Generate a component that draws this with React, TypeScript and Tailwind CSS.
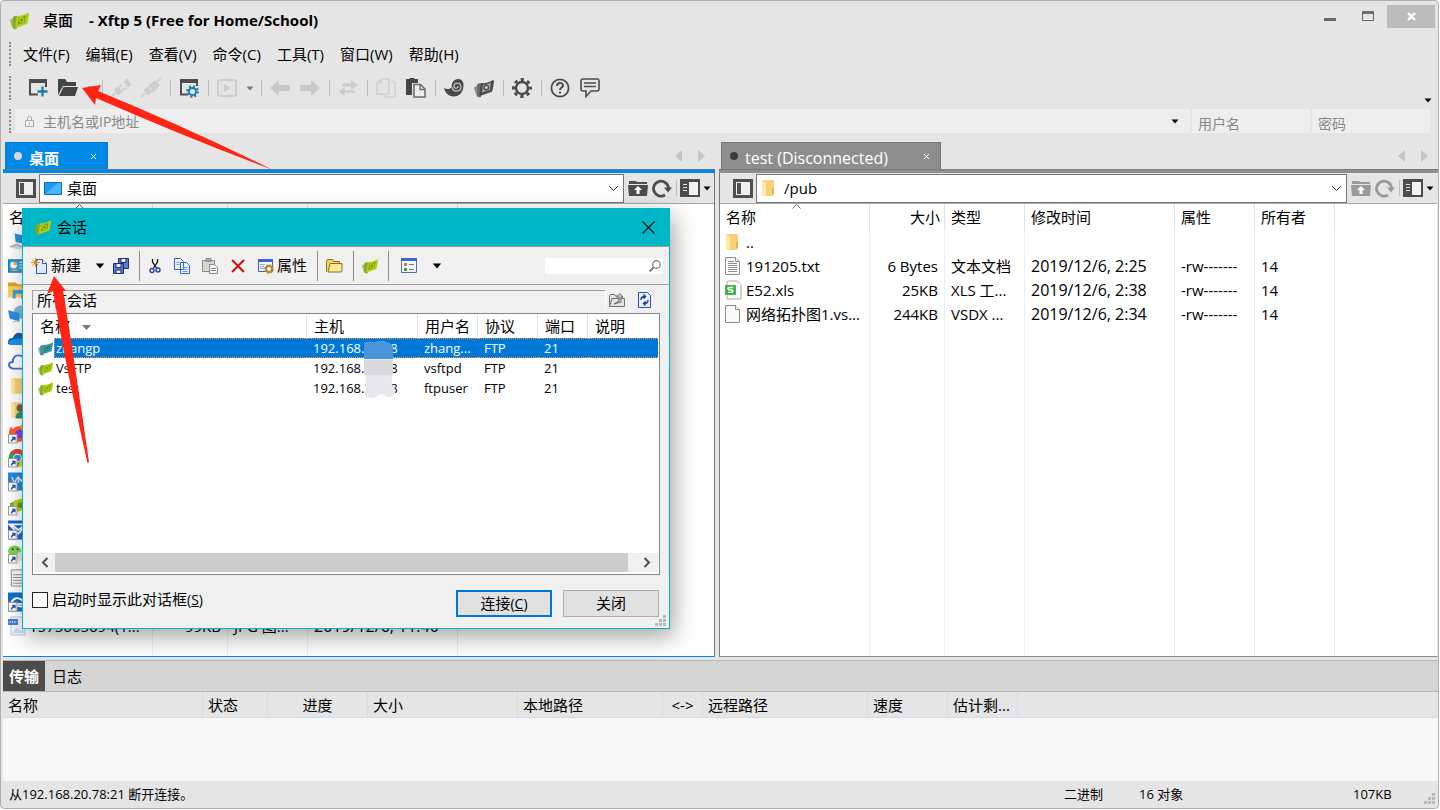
import React from "react";
import clsx from "clsx";

type IconProps = { className?: string };

const Caret = ({ className = "fill-black" }: IconProps) => (
  <svg className={className} width="8" height="5" viewBox="0 0 8 5">
    <path d="M0.5 0.5h7L4 4.5z" />
  </svg>
);

const Chevron = () => (
  <svg width="11" height="7" viewBox="0 0 11 7" fill="none" stroke="#333">
    <path d="M1 1l4.5 4.5L10 1" />
  </svg>
);

const XftpIcon = ({
  size = 16,
  front = "#b3cf12",
  back = "#7fa82e",
  hole = "#6d8f0c",
}: {
  size?: number;
  front?: string;
  back?: string;
  hole?: string;
}) => (
  <svg width={size} height={size} viewBox="0 0 20 20">
    <path d="M0 10q0-1.500 1.500-1.500L5 8l-1 10q-2 0-2.500-3z" fill={back} opacity="0.7" />
    <path d="M3 7q0-1 1.500-1.500L9 5 7 19q-3 1-4-1z" fill={back} />
    <path d="M7 5q5 1 12-3 1 0 1 1.500l-1.500 9q0 1-1.500 1.500L6 18q-1 0-.500-1.500z" fill={front} />
    <path d="M9 7q4 0 8-2.500l-1.200 7.500L8 14.500z" fill={hole} opacity="0.7" />
    <circle cx="12.300" cy="9.600" r="2.900" fill={front} />
    <circle cx="12.300" cy="9.600" r="1.500" fill={hole} />
  </svg>
);

const NewWindowIcon = () => (
  <svg width="20" height="20" viewBox="0 0 20 20">
    <path d="M10 16.5H2V2h16v7" fill="none" stroke="#4c4c4c" strokeWidth="2" />
    <path d="M1 1h18v4H1z" fill="#4c4c4c" />
    <path d="M14.5 8.500v10M9.500 13.500h10" stroke="#1f7fae" strokeWidth="2.400" />
  </svg>
);

const OpenFolderIcon = () => (
  <svg width="20" height="20" viewBox="0 0 20 20" fill="#444">
    <path d="M0 17V1h7l2 3h9v4H5z" />
    <path d="M5.500 9H20l-3 9H1z" />
  </svg>
);

const PlugIcon = ({ split }: { split?: boolean }) => (
  <svg width="22" height="20" viewBox="0 0 22 20" fill="#cecece" stroke="#cecece">
    <path d="M1 19l4-4" strokeWidth="2" />
    <path d="M4 12l4-3 4 5-4 3z" />
    <path d="M9 9l3-2M12 13l3-3" strokeWidth="2" />
    {split ? (
      <path d="M14 4l3-3 4 6-3 2zM15 8l2 3" />
    ) : (
      <path d="M10 7l5-4 4 4-5 6zM17 4l4-4" strokeWidth="1.500" />
    )}
  </svg>
);

const WindowGearIcon = () => (
  <svg width="20" height="20" viewBox="0 0 20 20">
    <path d="M8 16.500H2V2h16v6" fill="none" stroke="#4c4c4c" strokeWidth="2" />
    <path d="M1 1h18v4H1z" fill="#4c4c4c" />
    <circle cx="13.500" cy="13.500" r="3.600" fill="none" stroke="#1f7fae" strokeWidth="2" />
    <circle cx="13.500" cy="13.500" r="5.200" fill="none" stroke="#1f7fae" strokeWidth="2.400" strokeDasharray="2 2.080" />
  </svg>
);

const PlayIcon = () => (
  <svg width="20" height="20" viewBox="0 0 20 20">
    <rect x="1" y="2" width="18" height="16" rx="2" fill="none" stroke="#cfcfcf" strokeWidth="2" />
    <path d="M7 6l7 4-7 4z" fill="#cfcfcf" />
  </svg>
);

const ArrowIcon = ({ flip }: { flip?: boolean }) => (
  <svg className={clsx(flip && "rotate-180")} width="20" height="20" viewBox="0 0 20 20" fill="#c9c9c9">
    <path d="M0 10l9-8v5h11v6H9v5z" />
  </svg>
);

const SwapIcon = () => (
  <svg width="20" height="18" viewBox="0 0 20 18" fill="#cbcbcb">
    <path d="M4 4.500h9V1l7 5-7 5V7.500H4z" />
    <path d="M17 11v3H7v3.500L0 12.500l7-5V11z" stroke="#e5e5e5" strokeWidth="0.800" />
  </svg>
);

const CopyIcon = () => (
  <svg width="20" height="20" viewBox="0 0 20 20" fill="#e5e5e5" stroke="#cfcfcf" strokeWidth="1.500">
    <path d="M9 17v2h10V5l-2-1.500H15" />
    <path d="M1 5l4-4h8v15H1zM5 1v4H1" />
  </svg>
);

const PasteIcon = () => (
  <svg width="20" height="20" viewBox="0 0 20 20">
    <path d="M0 1h3l1-1h4l1 1h3v4H6v12H0z" fill="#454545" />
    <path d="M8 6.500h6.500L19 11v8H8z" fill="#eee" stroke="#6b6b6b" strokeWidth="1.600" />
    <path d="M14 7v4.500h5" fill="none" stroke="#6b6b6b" strokeWidth="1.400" />
  </svg>
);

const SwirlIcon = () => (
  <svg width="20" height="20" viewBox="0 0 20 20">
    <path d="M0 10c3 2 6 1 8-1C7 5 10 1 14 1c3 0 5.500 2 5.500 6 0 7-4 11.500-10 11.500-5 0-8.500-4-9.500-8.500z" fill="#494949" />
    <path d="M8 9c0 6 9 5 9 0 0-5-7-5-7-1 0 3 4.500 3 4 0" fill="none" stroke="#c9c9c9" strokeWidth="1.200" />
  </svg>
);

const GearIcon = () => (
  <svg width="20" height="20" viewBox="0 0 20 20" fill="none" stroke="#4a4a4a">
    <circle cx="10" cy="10" r="6" strokeWidth="2.400" />
    <circle cx="10" cy="10" r="8.400" strokeWidth="3" strokeDasharray="3.200 3.397" strokeDashoffset="1.600" />
  </svg>
);

const HelpIcon = () => (
  <svg width="20" height="20" viewBox="0 0 20 20" fill="none" stroke="#4c4c4c" strokeWidth="1.800">
    <circle cx="10" cy="10" r="8.600" />
    <path d="M7 8c0-4 6-4 6-.500 0 2-3 2.200-3 4.500" strokeWidth="2" />
    <path d="M10 13.500v2" strokeWidth="2" />
  </svg>
);

const ChatIcon = () => (
  <svg width="20" height="20" viewBox="0 0 20 20" fill="none" stroke="#4c4c4c" strokeWidth="1.600">
    <path d="M3 1h14q2 0 2 2v8q0 2-2 2h-6l-5 5.500V13H3q-2 0-2-2V3q0-2 2-2z" />
    <path d="M4 5h12M4 8.500h12" />
  </svg>
);

const FolderIcon = () => (
  <svg width="14" height="18" viewBox="0 0 14 18">
    <path d="M2 1h10l1 1v13l-1 2H2z" fill="#f6d276" />
    <path d="M11 9h2v6h-2z" fill="#e0b550" />
    <path d="M1 1l4 3v13.500L1 16z" fill="#ffe9a8" />
  </svg>
);

const DocIcon = ({ lines }: { lines?: boolean }) => (
  <svg width="15" height="18" viewBox="0 0 15 18" fill="#fafafa" stroke="#8c8c8c">
    <path d="M.500.500h10l4 4v13H.500z" />
    <path d="M10.500.500v4h4" />
    {lines && <path d="M3 4.500h6M3 6.500h9M3 8.500h9M3 10.500h9M3 12.500h9M3 14.500h9" />}
  </svg>
);

const XlsIcon = () => (
  <svg width="18" height="20" viewBox="0 0 18 20">
    <path d="M3.500 1h9L16 4.500V19H2V2z" fill="#fafafa" stroke="#a9a9a9" />
    <rect x="0" y="5" width="11" height="10" rx="1" fill="#45b14d" />
    <path d="M8 7.500H4.500q-1.500 0-1.500 1T4.500 10h2Q8 10 8 11t-1.500 1.300H3" fill="none" stroke="#fff" strokeWidth="1.300" />
  </svg>
);

const Shortcut = () => (
  <g>
    <rect x="0.500" y="10.500" width="9" height="9" fill="#fff" stroke="#999" />
    <path d="M3 18c0-2 1-3 2-3.500L4 13h4v4l-1.500-1.200C5 16.300 4.500 17 4.500 18z" fill="#24539b" />
  </g>
);

const desktopIcons = [
  <g key="pc">
    <path d="M7 1l13 3v9L8 10z" fill="#2c8fe0" />
    <path d="M0 15l9-4 9 4-7 3z" fill="#ccd5dc" />
    <path d="M3 15l6-2 5 2" fill="none" stroke="#9aa7b0" />
  </g>,
  <g key="panel">
    <rect x="0.500" y="3.500" width="19" height="13" fill="#2f9fe0" stroke="#1571ae" />
    <circle cx="6" cy="9" r="3.500" fill="#fff" />
    <path d="M6 9V5.500A3.500 3.500 0 0 1 9.500 9z" fill="#f2a43c" />
    <path d="M12 6h6M12 9h6M12 12h6" stroke="#fff" />
    <path d="M4 14.500h6" stroke="#f2a43c" strokeWidth="1.500" />
  </g>,
  <g key="libs">
    <path d="M0 2h8l2 2h10v4H0z" fill="#e0a12c" />
    <path d="M0 6h20v12H0z" fill="#fbd05c" />
    <path d="M5 10h12v9h-3v-5H8v5H5z" fill="#3f9be0" />
  </g>,
  <g key="net">
    <circle cx="13" cy="8" r="7" fill="#7fb9d6" />
    <path d="M0 6l12 3v9L2 15z" fill="#2c8fe0" />
    <path d="M4 19l8-1-3-2z" fill="#b8c4cc" />
  </g>,
  <g key="onedrive">
    <path d="M0 16q-1-6 5-6 3-7 9-5l6 4v8H2z" fill="#0f5fae" />
    <path d="M0 14q5-4 20-4v7H2z" fill="#1f8fe6" />
  </g>,
  <path key="cloud" d="M5 17q-4-1-4-4t4-3q0-7 6-7t6 6l3 1v7z" fill="#fff" stroke="#3c6fe0" strokeWidth="2" />,
  <g key="folder">
    <path d="M4 2h14v16H4z" fill="#f6d276" />
    <path d="M3 1l4 3v14l-4-2z" fill="#ffe9a8" />
  </g>,
  <g key="user">
    <path d="M4 2h14v16H4z" fill="#f6d276" />
    <path d="M3 1l4 3v14l-4-2z" fill="#ffe9a8" />
    <circle cx="13" cy="8" r="4" fill="#7a5a44" />
    <path d="M8 19q0-7 5-7t6 7z" fill="#2f8f6b" />
  </g>,
  <g key="firefox">
    <path d="M1 8q0-3 2-6l2 3q3-4 7-3 4-3 4-2 4 4 4 9a9 9 0 0 1-19 0z" fill="#ff5a36" />
    <path d="M12 1q8 2 8 9l-5 9q4-10-3-18z" fill="#ffc53a" />
    <circle cx="12" cy="10" r="4.500" fill="#7d3fe0" />
    <Shortcut />
  </g>,
  <g key="chrome">
    <circle cx="10" cy="10" r="9.500" fill="#2fa652" />
    <path d="M2 5a9.500 9.500 0 0 1 16 0l-8 1z" fill="#df4435" />
    <path d="M18.500 6a9.500 9.500 0 0 1-8 13.500L14 10z" fill="#fbc51c" />
    <circle cx="10" cy="10" r="4.500" fill="#fff" />
    <circle cx="10" cy="10" r="3.500" fill="#3f7fe8" />
    <Shortcut />
  </g>,
  <g key="vm">
    <rect width="20" height="19" fill="#2b83dc" />
    <path d="M4 5l3 6 3-6M11 11V5l3 4 3-4v6" fill="none" stroke="#cfe4fa" strokeWidth="1.500" />
    <Shortcut />
  </g>,
  <g key="xftp">
    <path d="M2 7l5-2-2 12-2-1z" fill="#7fa82e" />
    <path d="M7 4l13-3-2 13-12 3z" fill="#b3cf12" />
    <circle cx="13" cy="9" r="3" fill="#6d8f0c" />
    <Shortcut />
  </g>,
  <g key="mail">
    <rect width="20" height="20" fill="#1763e0" />
    <path d="M1 4h18l-8 10zM3 4l8 6 8-6" fill="none" stroke="#fff" strokeWidth="1.800" />
    <Shortcut />
  </g>,
  <g key="wechat">
    <ellipse cx="7" cy="7" rx="7" ry="6" fill="#7fd34c" />
    <ellipse cx="14" cy="13" rx="6" ry="5" fill="#e2e8e2" />
    <circle cx="5" cy="5" r="1" fill="#333" />
    <circle cx="10" cy="5" r="1" fill="#333" />
    <Shortcut />
  </g>,
  <g key="text">
    <path d="M3.500 1.500h12l4 4v13h-16z" fill="#fafafa" stroke="#8c8c8c" />
    <path d="M5 6.500h12M5 9.500h12M5 12.500h12M5 15.500h12" stroke="#8c8c8c" />
  </g>,
  <g key="viewer">
    <rect width="20" height="20" fill="#0f72c4" />
    <path d="M3 11q5-9 13-2v3H8q2 4 9 2" fill="none" stroke="#fff" strokeWidth="2" />
    <Shortcut />
  </g>,
];

const JpgIcon = () => (
  <svg width="18" height="20" viewBox="0 0 18 20">
    <path d="M3 1h11l3 4v14H3z" fill="#f4f7fd" stroke="#b9c9e8" />
    <path d="M4 17l5-6 3 4 2-2 3 4z" fill="#cfdcf4" />
    <rect x="0" y="3" width="10" height="6" fill="#4a80d8" />
    <path d="M2 5v2M4.500 5v2M7 5v2" stroke="#cfe0ff" />
  </svg>
);

const SidebarIcon = () => (
  <svg width="20" height="19" viewBox="0 0 20 19">
    <rect x="1.500" y="1.500" width="17" height="16" fill="#efefef" stroke="#4f4f4f" strokeWidth="3" />
    <path d="M4 4h4v11H4z" fill="#4f4f4f" />
  </svg>
);

const UpFolderIcon = ({ color }: { color: string }) => (
  <svg width="20" height="17" viewBox="0 0 20 17" fill={color}>
    <path d="M1 4V1h7l1 1h10v2z" />
    <path d="M0 5h20l-1 11H1z" />
    <path d="M10 6l4 4h-2.500v4h-3v-4H6z" fill="#fff" />
  </svg>
);

const ReloadIcon = ({ color }: { color: string }) => (
  <svg width="20" height="19" viewBox="0 0 20 19">
    <path d="M13 16A7.500 7.500 0 1 1 16.500 9" fill="none" stroke={color} strokeWidth="2.800" />
    <path d="M12 8.500h8l-4 5z" fill={color} />
  </svg>
);

const LayoutIcon = () => (
  <svg width="20" height="18" viewBox="0 0 20 18">
    <path d="M0 0h20v18H0z" fill="#4c4c4c" />
    <path d="M9 3h9v13H9z" fill="#f2f2f2" />
    <path d="M3 5.500h4M3 8.500h4M3 11.500h4" stroke="#ddd" />
  </svg>
);

const Grip = () => <div className="h-6 w-0 border-l-2 border-dotted border-[#8a8a8a]" />;

const ResizeGrip = () => (
  <svg width="11" height="11" viewBox="0 0 11 11" fill="#b9b9b9">
    <path d="M8 0h3v3H8zM4 4h3v3H4zM8 4h3v3H8zM0 8h3v3H0zM4 8h3v3H4zM8 8h3v3H8z" />
  </svg>
);

const ToolButton = ({ label, children }: { label: string; children: React.ReactNode }) => (
  <button aria-label={label} className="flex h-8 w-[30px] items-center justify-center">
    {children}
  </button>
);

const ToolDrop = ({ label }: { label: string }) => (
  <button aria-label={label} className="flex h-8 w-[15px] items-center justify-center">
    <Caret className="fill-[#777]" />
  </button>
);

const Sep = () => (
  <div className="flex w-2 justify-center">
    <div className="h-4 w-px bg-[#bdbdbd]" />
  </div>
);

const menus = ["文件(F)", "编辑(E)", "查看(V)", "命令(C)", "工具(T)", "窗口(W)", "帮助(H)"];

const TitleBar = () => (
  <header className="flex h-[38px] items-start pr-[3px] pl-[7px]">
    <div className="flex h-[38px] flex-1 items-center">
      <XftpIcon size={19} />
      <h1 className="flex gap-4 pl-[14px] text-[15px] font-bold">
        <span className="font-medium">桌面</span>
        <span>- Xftp 5 (Free for Home/School)</span>
      </h1>
    </div>
    <button aria-label="最小化" className="mt-1 flex h-6 w-8 items-center justify-center">
      <span className="mt-1 h-[3px] w-3 bg-[#6b6b6b]" />
    </button>
    <button aria-label="最大化" className="mt-1 mr-[3px] ml-[6px] flex h-6 w-8 items-center justify-center">
      <span className="mb-[2px] h-[10px] w-3 border border-t-[3px] border-[#6b6b6b]" />
    </button>
    <button aria-label="关闭窗口" className="mt-1 flex h-[23px] w-12 items-center justify-center bg-[#bcbcbc]">
      <svg width="9" height="9" viewBox="0 0 9 9" stroke="#fff" strokeWidth="2.400">
        <path d="M1 1l7 7M8 1L1 8" />
      </svg>
    </button>
  </header>
);

const MainToolbar = () => (
  <div className="flex h-[38px] items-center pr-[6px] pl-[6px]">
    <Grip />
    <div className="flex flex-1 items-center pl-3">
      <ToolButton label="新建会话"><NewWindowIcon /></ToolButton>
      <ToolButton label="打开"><OpenFolderIcon /></ToolButton>
      <ToolDrop label="打开选项" />
      <Sep />
      <ToolButton label="断开"><PlugIcon split /></ToolButton>
      <ToolButton label="重新连接"><PlugIcon /></ToolButton>
      <Sep />
      <ToolButton label="会话属性"><WindowGearIcon /></ToolButton>
      <Sep />
      <ToolButton label="传输"><PlayIcon /></ToolButton>
      <ToolDrop label="传输选项" />
      <Sep />
      <ToolButton label="后退"><ArrowIcon /></ToolButton>
      <ToolButton label="前进"><ArrowIcon flip /></ToolButton>
      <Sep />
      <ToolButton label="同步"><SwapIcon /></ToolButton>
      <Sep />
      <ToolButton label="复制"><CopyIcon /></ToolButton>
      <ToolButton label="粘贴"><PasteIcon /></ToolButton>
      <Sep />
      <ToolButton label="Xshell"><SwirlIcon /></ToolButton>
      <ToolButton label="Xftp"><XftpIcon size={20} front="#4a4a4a" back="#6b6b6b" hole="#cfcfcf" /></ToolButton>
      <Sep />
      <ToolButton label="选项"><GearIcon /></ToolButton>
      <Sep />
      <ToolButton label="帮助"><HelpIcon /></ToolButton>
      <ToolButton label="反馈"><ChatIcon /></ToolButton>
    </div>
    <button aria-label="更多" className="self-end pb-1"><Caret /></button>
  </div>
);

const inputStyle = "h-6 bg-[#eeeeee] text-sm text-black placeholder:text-[#888] outline-none";

const HostBar = () => (
  <div className="flex h-[35px] items-start gap-[2px] pt-[2px] pr-2 pl-[6px]">
    <Grip />
    <div className="ml-[2px] flex h-6 flex-1 items-center bg-[#eeeeee] pr-[11px] pl-[10px]">
      <svg width="9" height="11" viewBox="0 0 9 11" fill="none" stroke="#aaa">
        <path d="M.500 4.500h8v6h-8zM2.500 4.500v-3q0-1 2-1t2 1v3M4.500 6.500v2" />
      </svg>
      <input aria-label="主机名或IP地址" placeholder="主机名或IP地址" className={clsx(inputStyle, "flex-1 pl-[9px]")} />
      <button aria-label="历史主机"><Caret /></button>
    </div>
    <input aria-label="用户名" placeholder="用户名" className={clsx(inputStyle, "w-[118px] pt-1 pl-[6px]")} />
    <input aria-label="密码" placeholder="密码" className={clsx(inputStyle, "w-[118px] pt-1 pl-[6px]")} />
  </div>
);

const TabArrows = () => (
  <div className="ml-auto flex gap-4 self-center pr-[10px] text-[#c4c4c4]">
    <button aria-label="上一个标签">
      <svg width="7" height="12" viewBox="0 0 7 12" fill="currentColor"><path d="M7 0v12L0 6z" /></svg>
    </button>
    <button aria-label="下一个标签">
      <svg width="7" height="12" viewBox="0 0 7 12" fill="currentColor"><path d="M0 0v12l7-6z" /></svg>
    </button>
  </div>
);

type PaneProps = {
  active?: boolean;
  tab: string;
  path: string;
  pathIcon: React.ReactNode;
  children: React.ReactNode;
};

const Pane = ({ active, tab, path, pathIcon, children }: PaneProps) => {
  const tint = active ? "#4c4c4c" : "#9a9a9a";
  return (
    <section className="flex min-h-0 flex-col">
      <div className="flex h-[27px] items-stretch pl-[2px]">
        <button
          className={clsx(
            "flex items-center border border-b-0 pr-[10px] pl-2 text-white",
            active
              ? "w-[103px] border-[#0b7acb] bg-[#0089e6] text-[15px] font-semibold"
              : "w-[220px] border-[#777] bg-[#8e8e8e] text-base"
          )}
        >
          <span className={clsx("mr-[7px] size-2 rounded-full", active ? "bg-[#d8d8d8]" : "bg-[#3c3c3c]")} />
          <span className="flex-1 pt-1 text-left leading-5">{tab}</span>
          <svg width="7" height="7" viewBox="0 0 7 7" stroke="#fff">
            <path d="M1 1l5 5M6 1L1 6" />
          </svg>
        </button>
        <TabArrows />
      </div>
      <div className={clsx("h-1 border-t", active ? "border-[#5a7a92] bg-[#0089e6]" : "border-[#777] bg-[#8e8e8e]")} />
      <div
        className={clsx(
          "flex min-h-0 flex-1 flex-col border-r border-b",
          active ? "border-r-[#777] border-b-[#0089e6]" : "border-r-transparent border-b-[#8e8e8e] border-l border-l-[#777]"
        )}
      >
        <div className="flex h-[31px] items-center border-b border-[#a8a8a8] bg-[#e5e5e5] pr-[3px] pl-[13px]">
          <button aria-label="侧边栏" className="mr-[3px]"><SidebarIcon /></button>
          <div className="relative flex h-[29px] flex-1 items-center border border-[#777] bg-white pl-1">
            {pathIcon}
            <select aria-label="路径" className="h-full flex-1 appearance-none pl-[5px] text-[15px] outline-none">
              <option>{path}</option>
            </select>
            <span className="pointer-events-none absolute right-1"><Chevron /></span>
          </div>
          <button aria-label="上级目录" className="ml-1"><UpFolderIcon color={tint} /></button>
          <button aria-label="刷新" className="ml-1"><ReloadIcon color={tint} /></button>
          <Sep />
          <button aria-label="布局" className="flex items-center gap-[3px]">
            <LayoutIcon />
            <Caret />
          </button>
        </div>
        <div className="min-h-0 flex-1 overflow-hidden bg-white">{children}</div>
      </div>
    </section>
  );
};

type FileRow = { icon: React.ReactNode; cells: string[] };

const columns = [
  { name: "名称", width: "w-[150px]" },
  { name: "大小", width: "w-[75px]" },
  { name: "类型", width: "w-20" },
  { name: "修改时间", width: "w-[150px]" },
  { name: "属性", width: "w-20" },
  { name: "所有者", width: "w-20" },
];

const FileTable = ({ rows, count }: { rows: FileRow[]; count: number }) => (
  <table className="h-full w-full table-fixed border-separate border-spacing-0 text-[15px]">
    <thead>
      <tr className="h-[26px]">
        {columns.slice(0, count).map((col, i) => (
          <th
            key={col.name}
            className={clsx(
              "relative border-r border-[#e2e2e2] px-[6px] font-normal",
              col.width,
              i === 1 ? "pr-1 text-right" : "text-left"
            )}
          >
            {i === 0 && (
              <svg className="absolute top-0 left-[72px]" width="9" height="5" viewBox="0 0 9 5" fill="none" stroke="#666">
                <path d="M.500 4.500l4-4 4 4" />
              </svg>
            )}
            {col.name}
          </th>
        ))}
        <th />
      </tr>
    </thead>
    <tbody>
      {rows.map((row, r) => (
        <tr key={r} className="h-6">
          {row.cells.map((cell, i) => (
            <td
              key={i}
              className={clsx(
                "overflow-hidden border-r border-[#e6effa] whitespace-nowrap",
                i === 0 ? "pl-[5px]" : "px-[6px]",
                i === 1 && "text-right",
                i === 3 && "text-base leading-6"
              )}
            >
              {i === 0 ? (
                <span className="flex items-center gap-[2px]">
                  <span className="flex w-[19px] items-center">{row.icon}</span>
                  {cell}
                </span>
              ) : (
                cell
              )}
            </td>
          ))}
          <td />
        </tr>
      ))}
      <tr>
        {columns.slice(0, count).map((col) => (
          <td key={col.name} className="border-r border-[#e6effa]" />
        ))}
        <td />
      </tr>
    </tbody>
  </table>
);

const localRows: FileRow[] = [
  ...desktopIcons.map((drawing) => ({
    icon: <svg width="20" height="20" viewBox="0 0 20 20">{drawing}</svg>,
    cells: ["", "", "", ""],
  })),
  { icon: <JpgIcon />, cells: ["1575605694(1...", "99KB", "JPG 图...", "2019/12/6, 11:40"] },
];

const remoteRows: FileRow[] = [
  { icon: <FolderIcon />, cells: ["..", "", "", "", "", ""] },
  { icon: <DocIcon lines />, cells: ["191205.txt", "6 Bytes", "文本文档", "2019/12/6, 2:25", "-rw-------", "14"] },
  { icon: <XlsIcon />, cells: ["E52.xls", "25KB", "XLS 工...", "2019/12/6, 2:38", "-rw-------", "14"] },
  { icon: <DocIcon />, cells: ["网络拓扑图1.vs...", "244KB", "VSDX ...", "2019/12/6, 2:34", "-rw-------", "14"] },
];

const transferColumns = [
  { name: "名称", style: "w-[200px] text-left" },
  { name: "状态", style: "w-[65px] text-left" },
  { name: "进度", style: "w-[100px] text-center" },
  { name: "大小", style: "w-[150px] text-left" },
  { name: "本地路径", style: "w-[145px] text-left" },
  { name: "<->", style: "w-10 text-center" },
  { name: "远程路径", style: "w-[165px] text-left" },
  { name: "速度", style: "w-20 text-left" },
  { name: "估计剩...", style: "w-[70px] text-left" },
];

const TransferPanel = () => (
  <section className="border-t border-[#b5b5b5]">
    <div className="flex h-[31px] border-b border-[#b5b5b5] bg-[#d5d5d5] text-[15px]">
      <button className="w-[42px] bg-[#4c4c4c] font-bold text-white">传输</button>
      <button className="w-11">日志</button>
    </div>
    <div className="h-[89px] bg-[#f8f8f8]">
      <table className="w-full table-fixed border-separate border-spacing-0 text-[15px]">
        <thead>
          <tr className="h-[26px] bg-[#e5e5e5]">
            {transferColumns.map((col) => (
              <th key={col.name} className={clsx("border-r border-b border-[#d3dbe4] px-[5px] pt-[2px] font-normal whitespace-nowrap", col.style)}>
                {col.name}
              </th>
            ))}
            <th className="border-b border-[#d3dbe4]" />
          </tr>
        </thead>
      </table>
    </div>
  </section>
);

const StatusBar = () => (
  <footer className="flex h-[27px] items-center pr-[3px] pl-[6px] text-[13px]">
    <span className="flex-1">从192.168.20.78:21 断开连接。</span>
    <span className="w-[75px]">二进制</span>
    <span className="w-[214px]">16 对象</span>
    <span className="w-[71px]">107KB</span>
    <span className="self-end pb-1"><ResizeGrip /></span>
  </footer>
);

const sessions = [
  { name: "zhangp", user: "zhang...", selected: true },
  { name: "VsFTP", user: "vsftpd", selected: false },
  { name: "test", user: "ftpuser", selected: false },
];

const DialogSep = () => <div className="h-[30px] w-px bg-[#8a8a8a]" />;

const DialogToolbar = () => (
  <div className="flex h-[38px] items-center border-b border-[#a0a0a0] pr-[6px] pl-2 text-[15px]">
    <button className="flex items-center gap-1">
      <svg width="16" height="16" viewBox="0 0 16 16">
        <path d="M5.500 1.500h6l4 4v10h-10z" fill="#dfe9fb" stroke="#3457a6" />
        <path d="M11.500 1.500v4h4" fill="#fff" stroke="#3457a6" />
        <path d="M4.500 0v9M0 4.500h9M1.500 1.500l6 6M7.500 1.500l-6 6" stroke="#e08a1e" />
      </svg>
      新建
    </button>
    <button aria-label="新建选项" className="ml-[14px]"><Caret className="h-[6px] w-[10px] fill-black" /></button>
    <button aria-label="保存" className="ml-2">
      <svg width="16" height="16" viewBox="0 0 16 16" stroke="#1e2f6e">
        <path d="M5.500.500h10v10h-10z" fill="#5d7fd0" />
        <path d="M8 .500h5v4H8z" fill="#eef" />
        <path d="M.500 5.500h10v10H.500z" fill="#5d7fd0" />
        <path d="M3 5.500h5v4H3zM3 12h5v3.500H3z" fill="#eef" />
      </svg>
    </button>
    <span className="mr-2 ml-[10px]"><DialogSep /></span>
    <div className="flex gap-3">
      <button aria-label="剪切">
        <svg width="14" height="16" viewBox="0 0 14 16" fill="none">
          <path d="M4.500 1v3l4 6M9.500 1v3l-4 6" stroke="#111" strokeWidth="1.300" />
          <circle cx="4" cy="12.500" r="2" stroke="#2b3fa0" strokeWidth="1.400" />
          <circle cx="10" cy="12" r="2" stroke="#2b3fa0" strokeWidth="1.400" />
        </svg>
      </button>
      <button aria-label="复制会话">
        <svg width="16" height="16" viewBox="0 0 16 16" fill="#eaf1fd" stroke="#3b62b5">
          <path d="M.500.500h6l3 3v8h-9zM6.500 4.500h6l3 3v8h-9z" />
          <path d="M2.500 4.500h3M2.500 6.500h3M8.500 9.500h5M8.500 11.500h5M8.500 13.500h5" stroke="#6d96de" />
        </svg>
      </button>
      <button aria-label="粘贴会话">
        <svg width="16" height="16" viewBox="0 0 16 16" fill="#d6d6d6" stroke="#8b8b8b">
          <path d="M.500 2.500h12v11H.500z" />
          <path d="M4 .500h5v3H4z" fill="#aaa" />
          <path d="M7.500 6.500h5l3 3v6h-8z" fill="#f2f2f2" />
          <path d="M9 10.500h5M9 12.500h5" />
        </svg>
      </button>
      <button aria-label="删除">
        <svg width="16" height="16" viewBox="0 0 16 16" stroke="#d2100a" strokeWidth="2">
          <path d="M2 2l12 12M14 2L2 14" />
        </svg>
      </button>
      <button className="flex items-center gap-[3px]">
        <svg width="16" height="16" viewBox="0 0 16 16">
          <path d="M.500 1.500h14v12H.500z" fill="#f3f6fd" stroke="#4462b0" />
          <path d="M0 1h15v3H0z" fill="#3f66d0" />
          <path d="M2 6.500h5M2 8.500h4M2 10.500h4" stroke="#8aa2d6" />
          <circle cx="11" cy="11" r="3" fill="#fff" stroke="#b9862b" strokeWidth="2" />
          <circle cx="11" cy="11" r="4.200" fill="none" stroke="#b9862b" strokeWidth="1.400" strokeDasharray="1.600 1.700" />
        </svg>
        属性
      </button>
    </div>
    <span className="mr-2 ml-[10px]"><DialogSep /></span>
    <button aria-label="新建文件夹">
      <svg width="17" height="14" viewBox="0 0 17 14" stroke="#8f6b12">
        <path d="M.500 12.500v-10l1-2h5l1 2h6v3" fill="#f6d56a" />
        <path d="M4 4.500h12v7l-1 1.500H2z" fill="#fdeb9c" />
      </svg>
    </button>
    <span className="mr-2 ml-[10px]"><DialogSep /></span>
    <button aria-label="Xftp 会话"><XftpIcon /></button>
    <span className="mr-3 ml-[10px]"><DialogSep /></span>
    <button aria-label="查看方式" className="flex items-center gap-[15px]">
      <svg width="16" height="15" viewBox="0 0 16 15">
        <path d="M.500.500h15v14H.500z" fill="#f1f6fd" stroke="#5a6f94" />
        <path d="M0 0h16v3H0z" fill="#3f66d0" />
        <path d="M3 5h3v3H3z" fill="#e07b2a" />
        <path d="M3 10h3v3H3z" fill="#3f9e3f" />
        <path d="M8 6.500h5M8 11.500h5" stroke="#777" />
      </svg>
      <Caret className="h-[6px] w-[10px] fill-black" />
    </button>
    <div className="ml-auto flex h-4 w-[118px] items-center bg-white pr-[2px]">
      <input aria-label="搜索会话" className="h-4 min-w-0 flex-1 text-xs outline-none" />
      <svg width="12" height="12" viewBox="0 0 12 12" fill="none" stroke="#777" strokeWidth="1.200">
        <circle cx="7.500" cy="4.500" r="3.800" />
        <path d="M4.500 7.500L.500 11.500" strokeWidth="1.800" />
      </svg>
    </div>
  </div>
);

const sessionHeaders = [
  { name: "名称", width: "w-[274px]" },
  { name: "主机", width: "w-[111px]" },
  { name: "用户名", width: "w-[60px]" },
  { name: "协议", width: "w-[60px]" },
  { name: "端口", width: "w-[50px]" },
];

const SessionDialog = () => (
  <div
    role="dialog"
    aria-label="会话"
    className="absolute top-[208px] left-[22px] w-[648px] border border-[#00b4c4] bg-[#f0f0f0] shadow-[4px_8px_22px_rgba(0,0,0,0.35)]"
  >
    <div className="flex h-[37px] items-center bg-[#00b7c7] pr-[14px] pl-[11px] text-[15px]">
      <XftpIcon size={17} />
      <h2 className="flex-1 pl-[6px]">会话</h2>
      <button aria-label="关闭对话框">
        <svg width="13" height="13" viewBox="0 0 13 13" stroke="#111" strokeWidth="1.200">
          <path d="M.500.500l12 12M12.500.500l-12 12" />
        </svg>
      </button>
    </div>
    <div className="border-t border-[#a0a0a0]">
      <DialogToolbar />
    </div>
    <div className="px-[9px] pt-1 pb-[11px]">
      <div className="mb-[3px] flex h-[21px] items-center">
        <div className="flex h-5 flex-1 items-center border-t border-r border-l border-t-[#a0a0a0] border-r-white border-l-[#a0a0a0] pl-1 text-[15px] leading-5">
          所有会话
        </div>
        <button aria-label="上级文件夹" className="mx-[3px]">
          <svg width="16" height="14" viewBox="0 0 16 14" fill="#e3e3e3" stroke="#6f6f6f">
            <path d="M.500 13V3l1-1.500h4l1 1.500H13v3" />
            <path d="M.500 13.500L3 5.500h12.500v8z" />
            <path d="M5 11l5-3V4H7.500L11 .500 14 4h-2v5z" fill="#ccc" />
          </svg>
        </button>
        <button aria-label="刷新会话" className="mr-[9px] ml-[10px]">
          <svg width="13" height="16" viewBox="0 0 13 16" fill="none" stroke="#2d55ab">
            <path d="M.500.500h9l3 3v12H.500z" fill="#e4eefc" />
            <path d="M3 8q0-3.500 4-3.500M5.500 2.500l2 2-2 2M10 8q0 3.500-4 3.500M7.500 13.500l-2-2 2-2" stroke="#1e3f8f" strokeWidth="1.400" />
          </svg>
        </button>
      </div>
      <div className="flex h-[262px] flex-col border border-[#828790] bg-white">
        <div className="flex-1 pr-[1px]">
          <table className="w-full table-fixed border-separate border-spacing-0 text-[13px]">
            <thead>
              <tr className="h-6 text-left text-[15px] leading-6">
                {sessionHeaders.map((col, i) => (
                  <th key={col.name} className={clsx("border-r border-[#e2e2e2] pl-[7px] font-normal whitespace-nowrap", col.width)}>
                    {col.name}
                    {i === 0 && (
                      <svg className="ml-3 inline" width="9" height="5" viewBox="0 0 9 5" fill="#777">
                        <path d="M0 0h9L4.500 5z" />
                      </svg>
                    )}
                  </th>
                ))}
                <th className="pl-[7px] font-normal">说明</th>
              </tr>
            </thead>
            <tbody>
              {sessions.map((s) => (
                <tr key={s.name} className={clsx("h-5 leading-[18px]", s.selected && "text-white")}>
                  <td>
                    <div className="flex items-center pl-[5px]">
                      {s.selected ? <XftpIcon size={15} front="#3f9a9e" back="#3f9488" hole="#1d6675" /> : <XftpIcon size={15} />}
                      <span
                        className={clsx(
                          "ml-[1px] flex-1 border-y border-l border-dotted pl-[1px]",
                          s.selected ? "border-[#ff9a3c] bg-[#0078d7]" : "border-transparent"
                        )}
                      >
                        {s.name}
                      </span>
                    </div>
                  </td>
                  {["192.168.20.78", s.user, "FTP", "21", ""].map((cell, i) => (
                    <td
                      key={i}
                      className={clsx(
                        "border-y border-dotted pl-[6px]",
                        s.selected ? "border-[#ff9a3c] bg-[#0078d7]" : "border-transparent"
                      )}
                    >
                      {cell}
                    </td>
                  ))}
                </tr>
              ))}
            </tbody>
          </table>
        </div>
        <div className="mx-[1px] mb-[2px] flex h-[19px] items-stretch bg-[#f0f0f0]">
          <button aria-label="向左滚动" className="flex w-[21px] items-center justify-center">
            <svg width="8" height="11" viewBox="0 0 8 11" fill="none" stroke="#505050" strokeWidth="2"><path d="M6.500 1L2 5.500 6.500 10" /></svg>
          </button>
          <div className="flex-1 bg-[#cdcdcd]" />
          <button aria-label="向右滚动" className="flex w-[30px] items-center justify-center pl-2">
            <svg width="8" height="11" viewBox="0 0 8 11" fill="none" stroke="#505050" strokeWidth="2"><path d="M1.500 1L6 5.500 1.500 10" /></svg>
          </button>
        </div>
      </div>
      <div className="flex items-start pt-[15px] pr-[1px] text-[15px]">
        <label className="flex flex-1 items-center gap-1">
          <input type="checkbox" className="size-4 appearance-none border border-[#222] bg-white" />
          <span className="leading-[18px]">
            启动时显示此对话框<span className="text-sm">(<u>S</u>)</span>
          </span>
        </label>
        <button className="h-[27px] w-24 border-2 border-[#0078d7] bg-[#e1e1e1]">
          连接<span className="text-sm">(<u>C</u>)</span>
        </button>
        <button className="ml-[11px] h-[27px] w-24 border border-[#adadad] bg-[#e1e1e1]">关闭</button>
      </div>
    </div>
    <span className="absolute right-[3px] bottom-[2px]"><ResizeGrip /></span>
  </div>
);

/* hand-drawn marks laid over the window */
const Marks = () => (
  <svg className="pointer-events-none absolute top-0 left-0" width="440" height="480" viewBox="0 0 440 480">
    <path
      d="M364 344q5-4 10-1 7-4 14 0 6 1 5 8l-1 30q-1 3 2 6 3 5-1 9-5 3-9-1-3-2-6 0-3 4-8 3-5-1-5-6l1-8z"
      fill="#e8e8ec"
    />
    <path d="M364 344q5-4 10-1 7-4 14 0 6 1 5 8v8h-29z" fill="#4a94da" />
    <path d="M364 360h29v15h-29z" fill="#dadade" />
    <g fill="#ff2413">
      <path d="M82 88l19-3-3 6q90 37 175 79-88-33-177-72l-1 7z" />
      <path d="M54 276l12 15h-3q7 40 26 171-2 2-2-1-22-98-34-170l-6 3z" />
    </g>
  </svg>
);

export default function App() {
  return (
    <div className="relative h-screen w-full overflow-hidden bg-white pr-[1px] pb-[1px] font-['Open_Sans','Noto_Sans_CJK_SC',sans-serif] text-black">
      <div className="flex h-full flex-col rounded-sm border border-[#b0b0b0] bg-[#e5e5e5] pl-[2px]">
        <TitleBar />
        <nav className="flex h-[30px] items-center pl-[6px]">
          <Grip />
          <div className="flex gap-4 pl-3 text-[15px]">
            {menus.map((m) => (
              <button key={m}>{m}</button>
            ))}
          </div>
        </nav>
        <MainToolbar />
        <HostBar />
        <main className="grid min-h-0 flex-1 grid-cols-[712fr_719fr] gap-1">
          <Pane
            active
            tab="桌面"
            path="桌面"
            pathIcon={
              <svg width="18" height="13" viewBox="0 0 18 13">
                <path d="M.500.500h17v12H.500z" fill="#1e9cf5" stroke="#0b6fc0" />
                <path d="M1 12L14 1h3v11z" fill="#4ab5fb" />
              </svg>
            }
          >
            <FileTable rows={localRows} count={4} />
          </Pane>
          <Pane
            tab="test (Disconnected)"
            path="/pub"
            pathIcon={<span className="mr-1 flex"><FolderIcon /></span>}
          >
            <FileTable rows={remoteRows} count={6} />
          </Pane>
        </main>
        <div className="h-[3px]" />
        <TransferPanel />
        <StatusBar />
      </div>
      <SessionDialog />
      <Marks />
    </div>
  );
}
